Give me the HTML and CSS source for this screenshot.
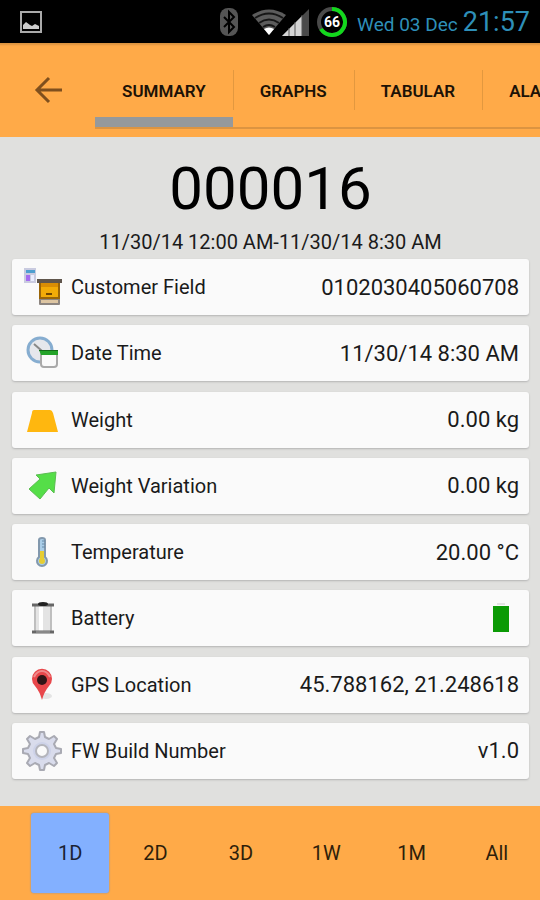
FILE: index.html
```
<!DOCTYPE html>
<html lang="en">
<head>
    <meta charset="UTF-8">
    <meta name="viewport" content="width=device-width, initial-scale=1.0">
    <title>000016 - Summary</title>
    <link rel="stylesheet" href="styles.css">
</head>
<body>
    <!-- system status bar -->
    <div class="status-bar">
        <svg class="status-picture" width="22" height="22" viewBox="0 0 22 22">
            <rect x="1" y="1" width="20" height="20" fill="none" stroke="#aaa" stroke-width="2"/>
            <path d="M3 18v-4l3-3 4 3 2 1 3-2 4 2v3z" fill="#ccc"/>
        </svg>
        <div class="status-icons">
            <svg width="18" height="28" viewBox="0 0 18 28">
                <rect width="18" height="28" rx="8" fill="#555"/>
                <path d="M4 9l10 10-5 5V4l5 5L4 19" fill="none" stroke="#000" stroke-width="2"/>
            </svg>
            <svg class="status-wifi" width="34" height="26" viewBox="0 0 34 26">
                <path d="M17 26L0 6Q17-5 34 6z" fill="#5c5c5c"/>
                <path d="M3 9Q17 0 31 9M7 14Q17 7 27 14M11 18Q17 14 23 18" fill="none" stroke="#161616" stroke-width="2"/>
                <path d="M17 26l-5-6q5-3 10 0z" fill="#fff"/>
            </svg>
            <svg class="status-signal" width="27" height="28" viewBox="0 0 27 28">
                <path d="M0 28L27 1v27z" fill="#4a4a4a"/>
                <path d="M0 28L20 8v20z" fill="#d4d4d4"/>
                <path d="M7 20v8M13 14v14M20 7v21" stroke="#555" stroke-width="1"/>
            </svg>
            <svg class="status-battery" width="32" height="32" viewBox="0 0 32 32">
                <circle cx="16" cy="16" r="13" fill="none" stroke="#4a4a4a" stroke-width="4"/>
                <path d="M16 3A13 13 0 1 1 5 23" fill="none" stroke="#12d81c" stroke-width="4"/>
                <text x="16" y="21" text-anchor="middle">66</text>
            </svg>
        </div>
        <span class="status-date">Wed 03 Dec</span>
        <span class="status-time">21:57</span>
    </div>

    <header class="app-bar">
        <button class="back" type="button" aria-label="Back">
            <svg width="28" height="28" viewBox="0 0 28 28">
                <path d="M15 2L3 14l12 12M3 14h25" fill="none" stroke="#7f4f1d" stroke-width="3"/>
            </svg>
        </button>
        <nav class="tabs">
            <a href="#summary" class="tab active">SUMMARY</a>
            <a href="#graphs" class="tab">GRAPHS</a>
            <a href="#tabular" class="tab">TABULAR</a>
            <a href="#alarms" class="tab">ALARMS</a>
        </nav>
    </header>

    <main id="summary">
        <h1>000016</h1>
        <p class="range">11/30/14 12:00 AM-11/30/14 8:30 AM</p>

        <ul class="cards">
            <li class="card">
                <svg class="icon" viewBox="0 0 40 40">
                    <rect x="2" y="1" width="12" height="15" fill="#c9cbe0"/>
                    <rect x="4" y="3" width="9" height="3" fill="#4e9fd0"/>
                    <rect x="4" y="8" width="4" height="6" fill="#a46cf0"/>
                    <rect x="9" y="8" width="3" height="6" fill="#e9edff"/>
                    <rect x="17" y="31" width="21" height="7" rx="1" fill="#8d8580"/>
                    <rect x="19" y="33" width="17" height="3" fill="#ddc5a2"/>
                    <rect x="17" y="15" width="21" height="17" fill="#9a6508"/>
                    <rect x="19" y="16" width="17" height="14" fill="#f2ab08"/>
                    <rect x="19" y="16" width="17" height="4" fill="#d98d05"/>
                    <rect x="15" y="12" width="25" height="4" fill="#5f554c"/>
                    <rect x="24" y="26" width="6" height="2" fill="#704500"/>
                </svg>
                <span class="label">Customer Field</span>
                <span class="value">0102030405060708</span>
            </li>
            <li class="card">
                <svg class="icon" viewBox="0 0 40 40">
                    <circle cx="18" cy="17" r="12" fill="#e6e7ec" stroke="#86add0" stroke-width="3"/>
                    <path d="M12 11l8 7h8" fill="none" stroke="#888" stroke-width="2"/>
                    <rect x="19" y="19" width="16" height="15" rx="3" fill="#fafafa" stroke="#a9a9a9" stroke-width="2"/>
                    <path d="M17 17h19v5H19z" fill="#24a329"/>
                    <path d="M17 17h19v1H17z" fill="#146b18"/>
                </svg>
                <span class="label">Date Time</span>
                <span class="value">11/30/14 8:30 AM</span>
            </li>
            <li class="card">
                <svg class="icon" viewBox="0 0 40 40">
                    <path d="M12 10h16q2 0 3 3l5 19H5l5-19q0-3 2-3z" fill="#ffb70f"/>
                </svg>
                <span class="label">Weight</span>
                <span class="value">0.00 kg</span>
            </li>
            <li class="card">
                <svg class="icon" viewBox="0 0 40 40">
                    <path d="M34 6L14 9l4 4L7 23l11 10 9-11 5 5z" fill="#55de48" stroke="#5bbd51" stroke-width="1"/>
                </svg>
                <span class="label">Weight Variation</span>
                <span class="value">0.00 kg</span>
            </li>
            <li class="card">
                <svg class="icon" viewBox="0 0 40 40">
                    <path d="M17 25V8q0-2 3-2t3 2v17a5 5 0 1 1-6 0z" fill="#a9cde8" stroke="#8298ad" stroke-width="2"/>
                    <circle cx="20" cy="29" r="3" fill="#e6cd32"/>
                    <path d="M20 19v10" stroke="#e6cd32" stroke-width="4"/>
                    <path d="M20 9h3M20 12h3M20 15h3" stroke="#678aa7" stroke-width="1"/>
                </svg>
                <span class="label">Temperature</span>
                <span class="value">20.00 °C</span>
            </li>
            <li class="card">
                <svg class="icon" viewBox="0 0 40 40">
                    <path d="M12 8h18v26H12z" fill="#e4e4e4"/>
                    <path d="M17 8h4v26h-4z" fill="#fff"/>
                    <path d="M13 8v26M29 8v26" stroke="#999" stroke-width="1"/>
                    <path d="M10 7h22M10 34h22" stroke="#666" stroke-width="3"/>
                    <path d="M14 34h14" stroke="#aaa" stroke-width="1"/>
                    <ellipse cx="21" cy="6" rx="5" ry="2" fill="#222"/>
                </svg>
                <span class="label">Battery</span>
                <span class="value">
                    <svg class="battery-level" viewBox="0 0 18 30" role="img" aria-label="Battery full">
                        <path d="M5 1h8" stroke="#ccc" stroke-width="1"/>
                        <rect x="1" y="3" width="16" height="26" fill="#0b9a05"/>
                    </svg>
                </span>
            </li>
            <li class="card">
                <svg class="icon" viewBox="0 0 40 40">
                    <ellipse cx="24" cy="31" rx="6" ry="3" fill="#e4e4e4"/>
                    <path d="M20 35q-2-8-7-14a10 10 0 1 1 14 0q-5 6-7 14z" fill="#e8474b"/>
                    <path d="M12 12q3-6 8-6t8 6" fill="none" stroke="#f08a8b" stroke-width="2"/>
                    <circle cx="20" cy="15" r="5" fill="#301517"/>
                </svg>
                <span class="label">GPS Location</span>
                <span class="value">45.788162, 21.248618</span>
            </li>
            <li class="card">
                <svg class="icon" viewBox="0 0 40 40">
                    <path d="M17 6l1-5h4l1 5 4 2 5-3 3 3-3 5 2 4 5 1v4l-5 1-2 4 3 5-3 3-5-3-4 2-1 5h-4l-1-5-4-2-5 3-3-3 3-5-2-4-5-1v-4l5-1 2-4-3-5 3-3 5 3z" fill="#d9dcec" stroke="#a9aab3" stroke-width="2" stroke-linejoin="round"/>
                    <circle cx="20" cy="20" r="9" fill="#cdd2e8"/>
                    <circle cx="20" cy="20" r="6" fill="#fafafa" stroke="#b4b5bc" stroke-width="2"/>
                </svg>
                <span class="label">FW Build Number</span>
                <span class="value">v1.0</span>
            </li>
        </ul>
    </main>

    <footer class="periods">
        <button type="button" class="selected">1D</button>
        <button type="button">2D</button>
        <button type="button">3D</button>
        <button type="button">1W</button>
        <button type="button">1M</button>
        <button type="button">All</button>
    </footer>
</body>
</html>
```
FILE: styles.css
```
* {
    box-sizing: border-box;
}

body {
    margin: 0;
    min-height: 100vh;
    display: flex;
    flex-direction: column;
    font-family: Roboto, sans-serif;
    font-size: 20px;
    color: #1a1a1a;
    background: #e0e0de;
}

/* status bar */
.status-bar {
    display: flex;
    align-items: center;
    height: 43px;
    padding: 0 10px 0 20px;
    background: #000;
    color: #2e8fb8;
}

.status-icons {
    display: flex;
    align-items: center;
    margin-left: auto;
}

.status-wifi {
    margin-left: 14px;
}

.status-signal {
    margin-left: -4px;
}

.status-battery {
    margin-left: 7px;
}

.status-battery text {
    font-size: 14px;
    font-weight: bold;
    fill: #fff;
}

.status-date {
    margin: 6px 5px 0 9px;
    font-size: 19px;
}

.status-time {
    font-size: 27px;
}

/* app bar */
.app-bar {
    display: flex;
    padding-bottom: 8px;
    background: #ffaa48;
    box-shadow: inset 0 4px 2px -2px #dc9340;
}

.back {
    display: flex;
    align-items: center;
    justify-content: center;
    flex: none;
    width: 95px;
    padding: 8px 0 0;
    border: none;
    background: none;
    cursor: pointer;
}

.tabs {
    display: flex;
    flex: 1;
    overflow: hidden;
    border-bottom: 2px solid #dc9441;
}

.tab {
    position: relative;
    flex: none;
    height: 84px;
    padding: 12px 27px 0;
    font-size: 17px;
    font-weight: 600;
    line-height: 72px;
    color: #1c1206;
    text-decoration: none;
}

.tab + .tab::before {
    content: "";
    position: absolute;
    left: 0;
    top: 27px;
    width: 1px;
    height: 40px;
    background: #e2983f;
}

.tabs .active {
    box-shadow: inset 0 -10px #96999b;
}

/* summary */
main {
    flex: 1;
    display: flex;
    flex-direction: column;
    padding: 16px 11px 27px 12px;
}

h1 {
    margin: 0;
    font-size: 60px;
    font-weight: 400;
    line-height: 72px;
    text-align: center;
    color: #000;
}

.range {
    margin: 4px 0;
    font-size: 20px;
    line-height: 26px;
    text-align: center;
}

.cards {
    flex: 1;
    display: flex;
    flex-direction: column;
    justify-content: space-between;
    margin: 0;
    padding: 0;
    list-style: none;
}

.card {
    display: flex;
    align-items: center;
    height: 56px;
    padding: 0 10px;
    border-radius: 3px;
    background: #fafafa;
    box-shadow: 0 1px 2px #b4b4b4;
}

.icon {
    width: 40px;
    height: 40px;
    margin-right: 9px;
}

.value {
    margin-left: auto;
    font-size: 22px;
}

.battery-level {
    display: block;
    width: 18px;
    height: 30px;
    margin-right: 9px;
}

/* period picker */
.periods {
    display: grid;
    grid-template-columns: repeat(6, 1fr);
    gap: 7px;
    padding: 7px 4px 7px 31px;
    background: #ffaa48;
}

.periods button {
    height: 80px;
    padding: 0;
    border: none;
    border-radius: 3px;
    background: none;
    font-family: inherit;
    font-size: 20px;
    color: #2e1e0a;
    cursor: pointer;
}

.periods .selected {
    background: #83b0ff;
    color: #1a2233;
    box-shadow: 0 0 2px #7f8fa8;
}
```
